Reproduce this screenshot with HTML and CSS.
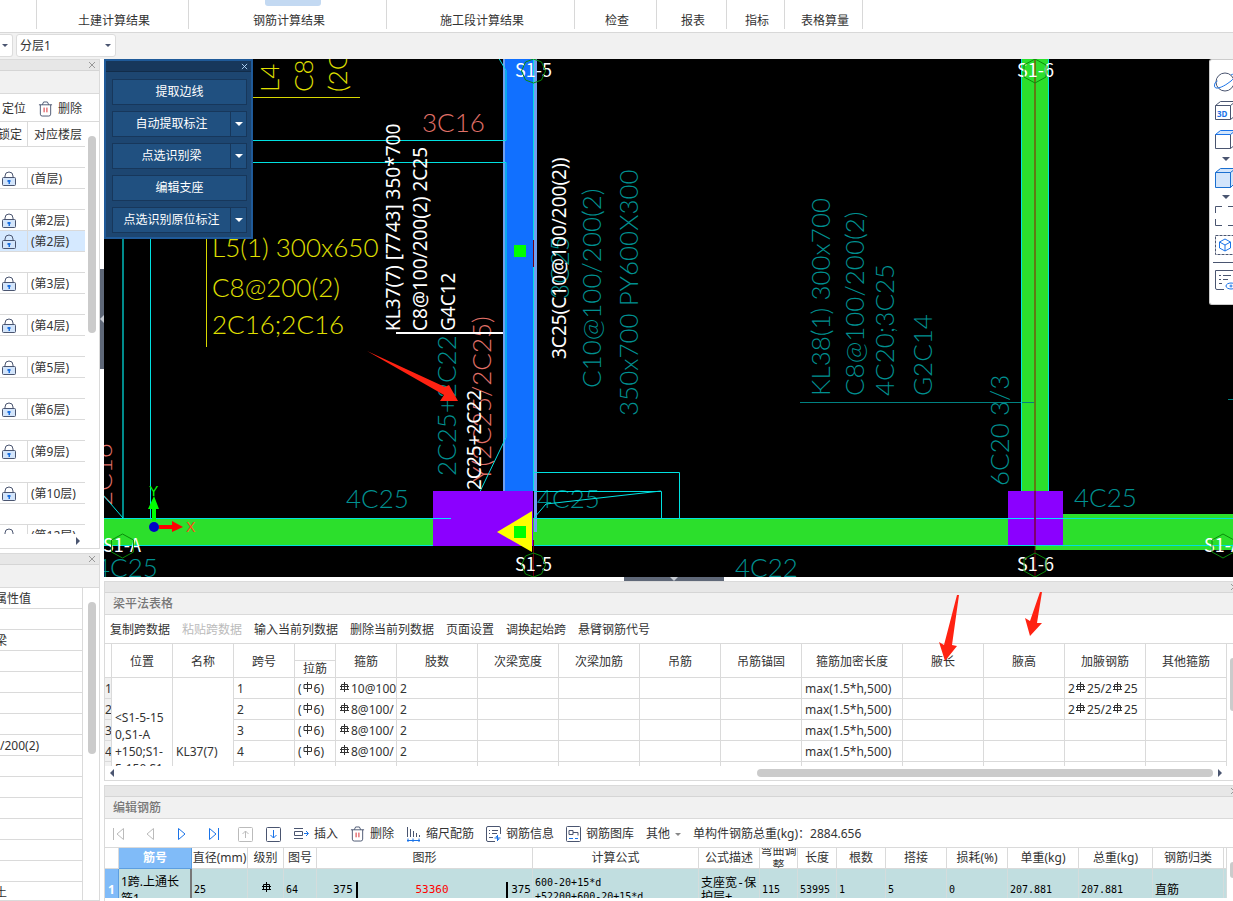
FILE: index.html
```html
<!DOCTYPE html>
<html lang="zh-CN">
<head>
  <meta charset="UTF-8">
  <meta name="viewport" content="width=device-width, initial-scale=1.0">
  <title>梁平法表格</title>
  <link rel="stylesheet" href="styles.css">
</head>
<body>

  <svg class="defs" width="0" height="0">
    <symbol id="lock" viewBox="0 0 16 16">
      <path d="M4 7V5a4 4 0 0 1 8 0v2" fill="none" stroke="#4a5570" />
      <rect x="1.500" y="6.500" width="13" height="8" rx="1" fill="#d3e5fb" stroke="#4a5570" />
      <path d="M6.500 9h3v2H9v2H7.500v-2h-1z" fill="#1a6fe0" />
    </symbol>
    <symbol id="trash" viewBox="0 0 16 16">
      <path d="M1 3.500h14M4.500 3.500l1.500-3h4l1.500 3M2.500 3.500v10q0 2 2 2h7q2 0 2-2v-10" fill="none" stroke="#4a5570" />
      <path d="M6.500 6.500v5M9.500 6.500v5" stroke="#d8232a" />
    </symbol>
    <symbol id="close" viewBox="0 0 8 8">
      <path d="M1 1l6 6M7 1l-6 6" fill="none" stroke="currentColor" />
    </symbol>
    <symbol id="hpb" viewBox="0 0 10 10">
      <path d="M4.500 0v10M1 2.500h7.500v4H1z" fill="none" stroke="currentColor" />
    </symbol>
    <symbol id="hrb" viewBox="0 0 10 10">
      <path d="M4.500 0v10M1.500 7.500v-5h6v5M0 7.500h9M0 4.500h9" fill="none" stroke="currentColor" />
    </symbol>
  </svg>

  <nav class="ribbon">
    <a href="#" class="group edge"></a>
    <a href="#" class="group civil">土建计算结果</a>
    <a href="#" class="group steel"><span class="active-mark"></span>钢筋计算结果</a>
    <a href="#" class="group stage">施工段计算结果</a>
    <a href="#" class="group check">检查</a>
    <a href="#" class="group report">报表</a>
    <a href="#" class="group index">指标</a>
    <a href="#" class="group calc">表格算量</a>
  </nav>

  <div class="filters">
    <label class="combo combo-cut"><select aria-label="楼层"><option></option></select></label>
    <label class="combo"><select aria-label="分层"><option>分层1</option></select></label>
  </div>

  <div class="workspace">

    <aside class="sidebar">
      <section class="panel floors">
        <div class="titlebar"><button class="close" aria-label="关闭"><svg width="8" height="8"><use href="#close" /></svg></button></div>
        <div class="caption"></div>
        <div class="side-tools">
          <button>定位</button>
          <button><svg width="15" height="16"><use href="#trash" /></svg>删除</button>
        </div>
        <div class="floor-body">
          <table class="floor-table">
            <thead>
              <tr><th class="lock-col"><span>锁定</span></th><th>对应楼层</th></tr>
            </thead>
            <tbody>
              <tr class="blank"><td colspan="2"></td></tr>
              <tr><td><svg width="16" height="16"><use href="#lock" /></svg></td><td>(首层)</td></tr>
              <tr class="blank"><td colspan="2"></td></tr>
              <tr><td><svg width="16" height="16"><use href="#lock" /></svg></td><td>(第2层)</td></tr>
              <tr class="selected"><td><svg width="16" height="16"><use href="#lock" /></svg></td><td>(第2层)</td></tr>
              <tr class="blank"><td colspan="2"></td></tr>
              <tr><td><svg width="16" height="16"><use href="#lock" /></svg></td><td>(第3层)</td></tr>
              <tr class="blank"><td colspan="2"></td></tr>
              <tr><td><svg width="16" height="16"><use href="#lock" /></svg></td><td>(第4层)</td></tr>
              <tr class="blank"><td colspan="2"></td></tr>
              <tr><td><svg width="16" height="16"><use href="#lock" /></svg></td><td>(第5层)</td></tr>
              <tr class="blank"><td colspan="2"></td></tr>
              <tr><td><svg width="16" height="16"><use href="#lock" /></svg></td><td>(第6层)</td></tr>
              <tr class="blank"><td colspan="2"></td></tr>
              <tr><td><svg width="16" height="16"><use href="#lock" /></svg></td><td>(第9层)</td></tr>
              <tr class="blank"><td colspan="2"></td></tr>
              <tr><td><svg width="16" height="16"><use href="#lock" /></svg></td><td>(第10层)</td></tr>
              <tr class="blank"><td colspan="2"></td></tr>
              <tr><td><svg width="16" height="16"><use href="#lock" /></svg></td><td>(第12层)</td></tr>
            </tbody>
          </table>
          <div class="vbar"></div>
        </div>
        <div class="side-scroll"><span class="tri-right"></span></div>
      </section>

      <section class="panel props">
        <div class="titlebar"><button class="close" aria-label="关闭"><svg width="8" height="8"><use href="#close" /></svg></button></div>
        <div class="caption"></div>
        <div class="prop-body">
          <table class="prop-table">
            <tr><td><span class="cut">属性值</span></td></tr>
            <tr><td></td></tr>
            <tr><td><span class="cut">梁</span></td></tr>
            <tr><td></td></tr>
            <tr><td></td></tr>
            <tr><td></td></tr>
            <tr><td></td></tr>
            <tr><td>/200(2)</td></tr>
            <tr><td></td></tr>
            <tr><td></td></tr>
            <tr><td></td></tr>
            <tr><td></td></tr>
            <tr><td></td></tr>
            <tr><td></td></tr>
            <tr><td><span class="cut">土</span></td></tr>
            <tr><td></td></tr>
          </table>
          <div class="vbar"></div>
        </div>
      </section>
    </aside>

    <div class="splitter"><button aria-label="收起"><span class="tri-left"></span></button></div>

    <main class="main">

      <div class="canvas">
        <svg class="drawing" width="100%" height="100%">
          <g transform="translate(-104 -59)">
            <!-- beams and columns -->
            <rect x="0" y="518" width="1020" height="28" fill="#2cdf2c" />
            <rect x="1035" y="514" width="1000" height="36" fill="#2cdf2c" />
            <rect x="1021" y="0" width="28" height="491" fill="#2cdf2c" />
            <rect x="503" y="0" width="34" height="491" fill="#6f9ff0" />
            <rect x="505" y="0" width="29" height="491" fill="#1170ff" />
            <rect x="534" y="491" width="3" height="41" fill="#6f9ff0" />

            <g class="cad teal">
              <text x="346" y="508">4C25</text>
              <text x="537" y="508">4C25</text>
              <text x="1074" y="507">4C25</text>
              <text x="735" y="577">4C22</text>
              <text x="95" y="577">4C25</text>
              <text x="456" y="476" transform="rotate(-90 456 476)">2C25+2C22</text>
              <text x="569" y="299" transform="rotate(-90 569 299)">3C25</text>
              <text x="601" y="388" transform="rotate(-90 601 388)">C10@100/200(2)</text>
              <text x="638" y="416" transform="rotate(-90 638 416)">350x700 PY600X300</text>
              <text x="830" y="396" transform="rotate(-90 830 396)">KL38(1) 300x700</text>
              <text x="864" y="396" transform="rotate(-90 864 396)">C8@100/200(2)</text>
              <text x="894" y="396" transform="rotate(-90 894 396)">4C20;3C25</text>
              <text x="932" y="396" transform="rotate(-90 932 396)">G2C14</text>
              <text x="1009" y="486" transform="rotate(-90 1009 486)">6C20 3/3</text>
            </g>
            <g class="cad yellow">
              <text x="279" y="92" transform="rotate(-90 279 92)">L4</text>
              <text x="313" y="92" transform="rotate(-90 313 92)">C8</text>
              <text x="347" y="92" transform="rotate(-90 347 92)">(2C</text>
              <text x="212" y="257">L5(1) 300x650</text>
              <text x="212" y="297">C8@200(2)</text>
              <text x="212" y="334">2C16;2C16</text>
            </g>
            <g class="cad salmon">
              <text x="422" y="132">3C16</text>
              <text x="112" y="506" transform="rotate(-90 112 506)">2C16</text>
              <text x="491" y="482" transform="rotate(-90 491 482)">Y(2C25/2C25)</text>
            </g>

            <!-- axis and outline lines -->
            <path d="M252 97.500h108M206.500 239v108" stroke="#d8d800" />
            <path d="M123 239v279" stroke="#008b8b" stroke-width="2" />
            <path d="M800 402.500h235M1228 399.500h5" stroke="#008080" />
            <g class="outline">
              <path d="M150.500 239v279M104 496l19 22M104 518.500h47M151 518.500h282M104 545.500h375" />
              <path d="M252 140.500h254v-70l-7-12M252 162.500h254v275l-26 54" />
              <path d="M470 491.500h36M533.500 59v432M534 472.500h145.500v46M534 491.500h127.500v27M661 491l-115 13-12 14" />
              <path d="M534 518.500h474M534 545.500h699M1063 518.500h170" />
              <path d="M1021.500 59v432M1048.500 59v432" />
            </g>

            <rect x="433" y="491" width="100" height="55" fill="#8b00ff" />
            <rect x="1008" y="491" width="55" height="54" fill="#8b00ff" />
            <path d="M433 518.500h18M1008 518.500h55" stroke="#00e5ff" />
            <path d="M1035 59v432" stroke="#5f7a14" stroke-width="2" />
            <path d="M1035 491v54" stroke="#7d0070" stroke-width="2" />
            <path d="M1035 546v31M533.500 540v37M533.500 240v27" stroke="#700010" />

            <!-- grips -->
            <path d="M497 532l35-21v41z" fill="#ff0" />
            <rect x="514" y="526" width="12" height="12" fill="#0f0" />
            <rect x="514" y="245" width="12" height="12" fill="#0f0" />

            <!-- grid bubbles -->
            <g class="note">
              <text x="515" y="77">S1-5</text>
              <text x="515" y="571">S1-5</text>
              <text x="1017" y="77">S1-6</text>
              <text x="1017" y="571">S1-6</text>
              <text x="103" y="552">S1-A</text>
              <text x="1204" y="552">S1-A</text>
            </g>
            <g fill="none" stroke="#0a8a0a">
              <path d="M533.500 59l8 3 4 9-4 9-8 3-8-3-4-9 4-9z" />
              <path d="M533.500 553l8 3 4 9-4 9-8 3-8-3-4-9 4-9z" />
              <path d="M1035 59l11 6v12l-11 6-11-6V65z" />
              <path d="M1035 553l11 6v12l-11 6-11-6v-12z" />
              <path d="M122.500 534l11 6v12l-11 6-11-6v-12z" />
              <path d="M1223 534l11 6v12l-11 6-11-6v-12z" />
            </g>
            <g class="note beam-note">
              <text x="400" y="331" transform="rotate(-90 400 331)">KL37(7) [7743] 350*700</text>
              <text x="427" y="331" transform="rotate(-90 427 331)">C8@100/200(2) 2C25</text>
              <text x="455" y="331" transform="rotate(-90 455 331)">G4C12</text>
              <text x="566" y="359" transform="rotate(-90 566 359)">3C25(C10@100/200(2))</text>
              <text x="481" y="490" transform="rotate(-90 481 490)">2C25+2C22</text>
            </g>
            <path d="M396 333h107" stroke="#fff" stroke-width="2" />

            <!-- coordinate axes -->
            <path d="M152 521v-12h-4l6-13 5 13h-3v12z" fill="#0f0" />
            <path d="M159 525h13v-4l11 6-11 5v-3h-13z" fill="#f00" />
            <circle cx="154" cy="527" r="5" fill="#0000c8" />
            <g class="axis">
              <text x="149" y="496" fill="#0f0">Y</text>
              <text x="186" y="532" fill="#ff4a1a">X</text>
            </g>

            <path d="M367 351l78 36 4-2 9 16h-18l4-6z" fill="#ff2212" />
          </g>
        </svg>

        <div class="tool-window">
          <div class="tool-title"><button aria-label="关闭"><svg width="7" height="7"><use href="#close" /></svg></button></div>
          <div class="tool-list">
            <div class="tool"><button class="label">提取边线</button></div>
            <div class="tool"><button class="label">自动提取标注</button><button class="drop" aria-label="更多"></button></div>
            <div class="tool"><button class="label">点选识别梁</button><button class="drop" aria-label="更多"></button></div>
            <div class="tool"><button class="label">编辑支座</button></div>
            <div class="tool"><button class="label">点选识别原位标注</button><button class="drop" aria-label="更多"></button></div>
          </div>
        </div>

        <div class="view-bar">
          <button aria-label="动态观察"><svg width="24" height="24" viewBox="0 0 24 24" fill="none">
            <circle cx="12" cy="12" r="9" stroke="#4a5570" />
            <path d="M18 5c6-3 6 1 0 6S2 21 1.500 16c0-3 1-4 3-5" stroke="#1a73e8" /></svg></button>
          <button aria-label="三维"><svg width="24" height="24" viewBox="0 0 24 24" fill="none" stroke="#4a5570">
            <path d="M2.500 6.500h15v14h-15zM2.500 6.500l5-4h15v14l-5 4M17.500 6.500l5-4" />
            <text x="4" y="18">3D</text></svg></button>
          <button aria-label="俯视"><svg width="24" height="24" viewBox="0 0 24 24" fill="none">
            <path d="M2.500 6.500h15v14h-15zM22.500 2.500v14l-5 4" stroke="#4a5570" />
            <path d="M2.500 6.500l5-4h15l-5 4z" fill="#d3e5fb" stroke="#1a73e8" /></svg></button>
          <span class="tri-down"></span>
          <button aria-label="实体"><svg width="24" height="24" viewBox="0 0 24 24" fill="#d3e5fb" stroke="#1a6fd0">
            <path d="M2.500 6.500h15v15h-15zM2.500 6.500l5-4h15l-5 4M22.500 2.500v14l-5 5v-15" /></svg></button>
          <span class="tri-down"></span>
          <button aria-label="全屏"><svg width="24" height="24" viewBox="0 0 24 24" fill="none" stroke="#4a5570">
            <path d="M2.500 9V2.500H9M2.500 15v6.500H9M15 2.500h7V9M15 21.500h7V15" /></svg></button>
          <button aria-label="局部三维"><svg width="24" height="24" viewBox="0 0 24 24" fill="none">
            <rect x="2.500" y="2.500" width="19" height="19" stroke="#4a5570" stroke-dasharray="3 1" />
            <path d="M12 6l5.500 3v6L12 18l-5.500-3V9zM6.500 9l5.500 3 5.500-3M12 12v6" stroke="#1a73e8" /></svg></button>
          <hr>
          <button aria-label="显示设置"><svg width="24" height="24" viewBox="0 0 24 24" fill="none" stroke="#4a5570">
            <path d="M11 21.500H4q-1.500 0-1.500-1.500V2.500H22M6 7.500h2M10 7.500h8M6 11.500h2M10 11.500h5M6 15.500h3" />
            <ellipse cx="18" cy="18" rx="5" ry="3" stroke="#1a73e8" /><circle cx="18" cy="18" r="1" stroke="#1a73e8" /></svg></button>
        </div>
      </div>

      <div class="h-splitter"><button aria-label="收起"><span class="tri-down"></span></button></div>

      <section class="panel beam-panel">
        <div class="titlebar"><button class="close" aria-label="关闭"><svg width="8" height="8"><use href="#close" /></svg></button></div>
        <h2>梁平法表格</h2>
        <div class="tools">
          <button>复制跨数据</button>
          <button disabled>粘贴跨数据</button>
          <button>输入当前列数据</button>
          <button>删除当前列数据</button>
          <button>页面设置</button>
          <button>调换起始跨</button>
          <button>悬臂钢筋代号</button>
        </div>
        <div class="beam-body">
          <table class="beam-table">
            <colgroup>
              <col class="c-no"><col class="c-61"><col class="c-61"><col class="c-61"><col class="c-tie"><col class="c-61">
              <col class="c-81"><col class="c-81"><col class="c-81"><col class="c-81"><col class="c-81">
              <col class="c-101"><col class="c-81"><col class="c-81"><col class="c-81"><col class="c-81">
            </colgroup>
            <thead>
              <tr>
                <th rowspan="2"></th><th rowspan="2">位置</th><th rowspan="2">名称</th><th rowspan="2">跨号</th><th></th>
                <th rowspan="2">箍筋</th><th rowspan="2">肢数</th><th rowspan="2">次梁宽度</th><th rowspan="2">次梁加筋</th>
                <th rowspan="2">吊筋</th><th rowspan="2">吊筋锚固</th><th rowspan="2">箍筋加密长度</th><th rowspan="2">腋长</th>
                <th rowspan="2">腋高</th><th rowspan="2">加腋钢筋</th><th rowspan="2">其他箍筋</th>
              </tr>
              <tr><th>拉筋</th></tr>
            </thead>
            <tbody>
              <tr>
                <td class="no">1</td>
                <td rowspan="7">&lt;S1-5-15<br>0,S1-A<br>+150;S1-<br>5-150,S1<br>-A+150&gt;</td>
                <td rowspan="7">KL37(7)</td>
                <td>1</td><td>(<svg class="bar"><use href="#hpb" /></svg>6)</td><td><svg class="bar"><use href="#hrb" /></svg>10@100</td><td>2</td>
                <td></td><td></td><td></td><td></td><td>max(1.5*h,500)</td><td></td><td></td>
                <td>2<svg class="bar"><use href="#hrb" /></svg>25/2<svg class="bar"><use href="#hrb" /></svg>25</td><td></td>
              </tr>
              <tr>
                <td class="no">2</td>
                <td>2</td><td>(<svg class="bar"><use href="#hpb" /></svg>6)</td><td><svg class="bar"><use href="#hrb" /></svg>8@100/</td><td>2</td>
                <td></td><td></td><td></td><td></td><td>max(1.5*h,500)</td><td></td><td></td>
                <td>2<svg class="bar"><use href="#hrb" /></svg>25/2<svg class="bar"><use href="#hrb" /></svg>25</td><td></td>
              </tr>
              <tr>
                <td class="no">3</td>
                <td>3</td><td>(<svg class="bar"><use href="#hpb" /></svg>6)</td><td><svg class="bar"><use href="#hrb" /></svg>8@100/</td><td>2</td>
                <td></td><td></td><td></td><td></td><td>max(1.5*h,500)</td><td></td><td></td><td></td><td></td>
              </tr>
              <tr>
                <td class="no">4</td>
                <td>4</td><td>(<svg class="bar"><use href="#hpb" /></svg>6)</td><td><svg class="bar"><use href="#hrb" /></svg>8@100/</td><td>2</td>
                <td></td><td></td><td></td><td></td><td>max(1.5*h,500)</td><td></td><td></td><td></td><td></td>
              </tr>
              <tr>
                <td class="no"></td>
                <td></td><td></td><td></td><td></td>
                <td></td><td></td><td></td><td></td><td></td><td></td><td></td><td></td><td></td>
              </tr>
              <tr><td class="no"></td><td colspan="13"></td></tr>
              <tr><td class="no"></td><td colspan="13"></td></tr>
            </tbody>
          </table>
          <div class="vbar"></div>
        </div>
        <div class="hscroll"><span class="tri-left"></span><div class="hbar"></div><span class="tri-right"></span></div>

        <svg class="marks" width="110" height="70">
          <path d="M24 3h2l-7 50 5 1-12 15-6-19 5 3z" fill="#ff2212" />
          <path d="M107 0h2l-5 31h5L97 44l-5-18 5 3z" fill="#ff2212" />
        </svg>
      </section>

      <section class="panel rebar-panel">
        <div class="titlebar"><button class="close" aria-label="关闭"><svg width="8" height="8"><use href="#close" /></svg></button></div>
        <h2>编辑钢筋</h2>
        <div class="tools icons">
          <div class="pager">
            <button aria-label="首行"><svg width="14" height="16" fill="none" stroke="#bbb"><path d="M2.500 2v12M12.500 2.500v11L6 8z" /></svg></button>
            <button aria-label="上一行"><svg width="14" height="16" fill="none" stroke="#bbb"><path d="M10.500 2.500v11L4 8z" /></svg></button>
            <button aria-label="下一行"><svg width="14" height="16" fill="none" stroke="#1a73e8"><path d="M3.500 2.500v11L10 8z" /></svg></button>
            <button aria-label="末行"><svg width="14" height="16" fill="none" stroke="#1a73e8"><path d="M2.500 2.500v11L9 8zM11.500 2v12" /></svg></button>
          </div>
          <button aria-label="上移"><svg width="16" height="16" fill="none" stroke="#bbb"><rect x="1.500" y="1.500" width="14" height="14" rx="1" /><path d="M8.500 12V5M5.500 8l3-3 3 3" /></svg></button>
          <button aria-label="下移"><svg width="16" height="16" fill="none" stroke="#4a5570"><rect x="1.500" y="1.500" width="14" height="14" rx="1" /><path d="M8.500 4v8M5.500 9l3 3 3-3" stroke="#1a73e8" /></svg></button>
          <button><svg width="16" height="16" fill="none" stroke="#4a5570"><path d="M1 2.500h9M1 12.500h9M1.500 5.500h8v4h-8z" /><path d="M11 7.500h4M13 5l2.500 2.500L13 10" stroke="#1a73e8" /></svg>插入</button>
          <button><svg width="15" height="16"><use href="#trash" /></svg>删除</button>
          <button><svg width="15" height="16" fill="none" stroke="#4a5570"><path d="M1.500 1v10M4.500 3v8M7.500 5v6M10.500 7v4M13.500 9v2" /><path d="M1 14.500h13M2 12.500v4M7 12.500v4M13 12.500v4" stroke="#1a73e8" /></svg>缩尺配筋</button>
          <button><svg width="15" height="16" fill="none" stroke="#4a5570"><path d="M9 15.500H2q-1.500 0-1.500-1.500V2Q.5.500 2 .5h11q1.500 0 1.500 1.500v6M3 4.500h1M6 4.500h6M3 7.500h1M6 7.500h5M3 11.500h4" /><path d="M11.500 9v6M8.500 12h6M10 10l3 4" stroke="#1a73e8" /></svg>钢筋信息</button>
          <button><svg width="15" height="16" fill="none" stroke="#4a5570"><rect x=".5" y=".5" width="14" height="15" rx="1" /><path d="M3 4.500h4v4H3zM7 6.500h5v3" /><path d="M3 12.500h4M9 12.500h3" stroke="#1a73e8" /></svg>钢筋图库</button>
          <button>其他<span class="tri-down"></span></button>
          <span>单构件钢筋总重(kg)：2884.656</span>
        </div>
        <div class="rebar-body">
          <table class="rebar-table">
            <colgroup>
              <col class="r-no"><col class="r-name"><col class="r-dia"><col class="r-grade"><col class="r-code"><col class="r-shape">
              <col class="r-formula"><col class="r-desc"><col class="r-bend"><col class="r-len"><col class="r-count">
              <col class="r-lap"><col class="r-lap"><col class="r-unit"><col class="r-total"><col class="r-kind"><col class="r-end">
            </colgroup>
            <thead>
              <tr>
                <th></th><th class="current">筋号</th><th>直径(mm)</th><th>级别</th><th>图号</th><th>图形</th><th>计算公式</th>
                <th>公式描述</th><th><div class="two">弯曲调整</div></th><th>长度</th><th>根数</th><th>搭接</th><th>损耗(%)</th>
                <th>单重(kg)</th><th>总重(kg)</th><th>钢筋归类</th><th></th>
              </tr>
            </thead>
            <tbody>
              <tr>
                <td class="current">1</td>
                <td class="name">1跨.上通长<br>筋1</td>
                <td>25</td><td><svg class="bar"><use href="#hrb" /></svg></td><td>64</td>
                <td><div class="shape"><span class="hook">375</span><span class="len">53360</span><span class="hook right">375</span></div></td>
                <td class="lines">600-20+15*d<br>+52200+600-20+15*d</td>
                <td class="lines cn">支座宽-保<br>护层+…</td>
                <td>115</td><td>53995</td><td>1</td><td>5</td><td>0</td><td>207.881</td><td>207.881</td><td class="cn">直筋</td><td></td>
              </tr>
            </tbody>
          </table>
          <div class="vbar"></div>
        </div>
        <div class="rebar-scroll"></div>
      </section>

    </main>
  </div>

</body>
</html>
```

FILE: styles.css
```css
* {
  box-sizing: border-box;
}

body {
  font-family: "Noto Sans", "Noto Sans CJK SC", sans-serif;
  font-size: 12px;
  line-height: 16px;
  color: #333;
  background-color: #fff;
  margin: 0;
  height: 100vh;
  display: flex;
  flex-direction: column;
  overflow: hidden;
}

button {
  font: inherit;
  color: inherit;
  background: none;
  border: none;
  padding: 0;
  cursor: pointer;
  white-space: nowrap;
}

svg {
  flex: none;
}

.defs {
  position: absolute;
}

/* ribbon */

.ribbon {
  display: flex;
  height: 33px;
  border-bottom: 1px solid #d8d8d8;
  flex: none;
}

.group {
  display: flex;
  align-items: flex-end;
  justify-content: center;
  position: relative;
  height: 29px;
  padding-left: 3px;
  border-right: 1px solid #d8d8d8;
  color: #333;
  text-decoration: none;
}

.edge { width: 37px; }
.civil { width: 152px; }
.steel { width: 198px; }
.stage { width: 188px; }
.check { width: 82px; }
.report { width: 70px; }
.index { width: 58px; }
.calc { width: 78px; }

.active-mark {
  position: absolute;
  top: 0;
  left: 76px;
  width: 56px;
  height: 6px;
  background-color: #c3d9f2;
  border-radius: 0 0 3px 3px;
}

.filters {
  display: flex;
  gap: 3px;
  height: 26px;
  padding: 1px 0;
  background-color: #f1f1f1;
  flex: none;
}

.combo {
  position: relative;
  width: 100px;
}

.combo-cut {
  width: 13px;
}

.combo select {
  appearance: none;
  display: block;
  width: 100%;
  height: 23px;
  padding: 0 3px;
  font: inherit;
  color: #333;
  background-color: #fff;
  border: 1px solid #dcdcdc;
  border-radius: 3px;
}

.combo-cut select {
  border-left: none;
  border-radius: 0 3px 3px 0;
}

.combo::after {
  content: "";
  position: absolute;
  right: 5px;
  top: 10px;
  border: 3px solid transparent;
  border-top-color: #4a5570;
  border-bottom: none;
}

/* layout */

.workspace {
  flex: 1;
  display: flex;
  min-height: 0;
}

.sidebar {
  width: 100px;
  display: flex;
  flex-direction: column;
  gap: 4px;
  flex: none;
}

.main {
  flex: 1;
  min-width: 0;
  display: flex;
  flex-direction: column;
}

.panel {
  position: relative;
  border: 1px solid #dadada;
  background-color: #fff;
}

.sidebar .panel {
  border-left: none;
}

.main .panel {
  border-right: none;
}

.titlebar {
  display: flex;
  justify-content: flex-end;
  align-items: center;
  height: 11px;
  background-color: #e7e7e7;
  border-bottom: 1px solid #d5d5d5;
}

.close {
  display: flex;
  margin-right: 3px;
  color: #999;
}

.main .close {
  margin-right: -5px;
}

.caption {
  height: 23px;
  background-color: #f1f1f1;
  border-bottom: 1px solid #dadada;
}

.tri-left, .tri-right, .tri-down {
  display: block;
  width: 0;
  height: 0;
  border: 4px solid transparent;
}

.tri-left { border-right-color: #4a5570; border-left: none; }
.tri-right { border-left-color: #4a5570; border-right: none; }
.tri-down { border-top-color: #4a5570; border-bottom: none; }

.vbar {
  background-color: #cbcbcb;
  border-radius: 4px;
  flex: none;
}

/* floor list */

.floors {
  height: 490px;
}

.side-tools {
  display: flex;
  gap: 12px;
  height: 28px;
  padding: 2px 0 0 2px;
  border-bottom: 1px solid #dadada;
}

.side-tools button {
  display: flex;
  align-items: center;
  gap: 5px;
}

.floor-body {
  display: flex;
  height: 412px;
  overflow: hidden;
}

table {
  border-collapse: separate;
  border-spacing: 0;
  table-layout: fixed;
}

th, td {
  font-weight: normal;
  padding: 0;
  overflow: hidden;
  white-space: nowrap;
}

.floor-table {
  width: 85px;
  height: 0;
  margin-right: 3px;
}

.floor-table tr {
  height: 21px;
}

.floor-table th, .floor-table td {
  border-bottom: 1px solid #dadada;
  text-align: left;
  padding: 2px 0 0 3px;
}

.floor-table th {
  height: 25px;
  padding-left: 6px;
}

.floor-table .lock-col {
  width: 28px;
  padding-left: 0;
}

.lock-col span {
  float: right;
  margin-right: 5px;
}

.floor-table tr > :first-child {
  border-right: 1px solid #dadada;
}

.floor-table .blank td {
  border-right: none;
}

.floor-table td {
  height: 21px;
}

.floor-table td:first-child {
  padding-left: 1px;
}

.floor-table td svg {
  display: block;
}

.selected td {
  background-color: #d5e9ff;
}

.floor-body .vbar {
  width: 8px;
  height: 197px;
  margin-top: 14px;
}

.side-scroll {
  padding: 3px 18px;
}

.side-scroll .tri-right {
  margin-left: 58px;
}

/* property list */

.props {
  flex: 1;
  overflow: hidden;
}

.prop-body {
  display: flex;
}

.prop-table {
  width: 83px;
  margin-right: 5px;
  border-right: 1px solid #dadada;
}

.prop-table td {
  height: 21px;
  padding-top: 1px;
  border-bottom: 1px solid #dadada;
}

.prop-table .cut {
  display: block;
  margin-left: -5px;
}

.prop-body .vbar {
  width: 8px;
  height: 152px;
  margin-top: 14px;
}

.splitter {
  width: 4px;
  padding-top: 210px;
  flex: none;
}

.splitter button {
  display: flex;
  align-items: center;
  width: 4px;
  height: 100px;
  background-color: #5f6878;
}

.splitter .tri-left {
  border-right-color: #c8ccd4;
}

/* drawing area */

.canvas {
  position: relative;
  flex: 1;
  min-height: 0;
  background-color: #000;
  overflow: hidden;
}

.drawing {
  display: block;
}

.cad {
  font-family: "Lato", sans-serif;
  font-size: 26px;
  font-weight: 300;
}

.teal { fill: #009090; }
.yellow { fill: #e0e000; }
.salmon { fill: #e07068; }

.outline {
  fill: none;
  stroke: #00e0e0;
}

.note {
  font-family: "Noto Sans CJK SC", sans-serif;
  font-size: 18px;
  fill: #fff;
}

.beam-note {
  font-family: "Noto Sans", sans-serif;
  font-size: 19px;
}

.axis {
  font-family: "Liberation Sans", sans-serif;
  font-size: 14px;
}

.tool-window {
  position: absolute;
  top: 0;
  left: 0;
  width: 149px;
  height: 180px;
  background-color: #1d4671;
  border: 2px solid #1f5a99;
}

.tool-title {
  display: flex;
  justify-content: flex-end;
  align-items: center;
  height: 11px;
  padding-right: 3px;
  background-color: #17375b;
  border-bottom: 1px solid #122c49;
}

.tool-title button {
  display: flex;
  color: #b8dcff;
}

.tool-list {
  display: flex;
  flex-direction: column;
  gap: 6px;
  padding: 7px 4px 0 6px;
}

.tool {
  display: flex;
  height: 26px;
  color: #fff;
  background-color: #205080;
  border: 1px solid #17375b;
}

.tool .label {
  flex: 1;
}

.tool .drop {
  display: flex;
  align-items: center;
  justify-content: center;
  width: 16px;
  border-left: 1px solid #17375b;
}

.drop::after {
  content: "";
  border: 4px solid transparent;
  border-top-color: #fff;
  border-bottom: none;
}

.view-bar {
  position: absolute;
  top: 0;
  right: 0;
  width: 24px;
  height: 246px;
  padding: 10px 0 0 3px;
  display: flex;
  flex-direction: column;
  gap: 5px;
  background-color: #fff;
  border: 1px solid #ccc;
  border-right: none;
  border-radius: 3px 0 0 3px;
  overflow: hidden;
}

.view-bar svg {
  display: block;
}

.view-bar text {
  font-size: 8px;
  font-weight: bold;
  fill: #1a73e8;
  stroke: none;
}

.view-bar .tri-down {
  margin-left: 9px;
  flex: none;
}

.view-bar hr {
  width: 100%;
  margin: 0;
  border: none;
  border-top: 1px solid #4a5570;
}

.h-splitter {
  height: 4px;
  flex: none;
}

.h-splitter button {
  display: flex;
  justify-content: center;
  width: 100px;
  height: 4px;
  margin-left: 520px;
  background-color: #5f6878;
}

.h-splitter .tri-down {
  border-top-color: #c8ccd4;
}

/* bottom panels */

h2 {
  margin: 0;
  height: 22px;
  padding-left: 8px;
  font-size: 12px;
  font-weight: 500;
  line-height: 22px;
  color: #777;
  background-color: #f1f1f1;
  border-bottom: 1px solid #dadada;
}

.tools {
  display: flex;
  align-items: center;
  gap: 12px;
  height: 29px;
  padding: 2px 0 0 5px;
  border-bottom: 1px solid #dadada;
}

.tools button:disabled {
  color: #bbb;
}

.beam-panel {
  height: 200px;
  flex: none;
  margin-bottom: 4px;
}

.beam-body {
  display: flex;
  justify-content: space-between;
  height: 122px;
  overflow: hidden;
}

.beam-table {
  width: 1122px;
  height: 0;
  flex: none;
}

.c-no { width: 7px; }
.c-61 { width: 61px; }
.c-tie { width: 41px; }
.c-81 { width: 81px; }
.c-101 { width: 101px; }

.beam-table th, .beam-table td {
  border-right: 1px solid #dadada;
  border-bottom: 1px solid #dadada;
}

.beam-table th {
  height: 17px;
  line-height: 16px;
}

.beam-table th[rowspan] {
  padding-top: 2px;
}

.beam-table td {
  height: 21px;
  padding-left: 3px;
  line-height: 17px;
}

.beam-table .no {
  padding: 0;
  background-color: #f1f1f1;
}

.bar {
  width: 10px;
  height: 10px;
  margin: 0 1px;
  vertical-align: 1px;
}

.beam-body .vbar, .rebar-body .vbar {
  width: 3px;
  height: 53px;
  margin-top: 14px;
  border-radius: 4px 0 0 4px;
}

.hscroll {
  display: flex;
  align-items: center;
  gap: 5px;
  height: 14px;
  padding: 0 11px 0 5px;
}

.hscroll .tri-left {
  margin-right: auto;
}

.hbar {
  width: 41%;
  height: 8px;
  background-color: #cbcbcb;
  border-radius: 4px;
}

.marks {
  position: absolute;
  top: 10px;
  right: 190px;
}

.rebar-panel {
  height: 116px;
  flex: none;
  border-bottom: none;
  overflow: hidden;
}

.icons button {
  display: flex;
  align-items: center;
  gap: 5px;
}

.pager {
  display: flex;
  gap: 18px;
  padding: 0 4px 0 1px;
}

.icons .tri-down {
  border-width: 3px;
  border-top-color: #888;
  border-bottom: none;
}

.rebar-body {
  display: flex;
  justify-content: space-between;
  height: 50px;
  overflow: hidden;
}

.rebar-body .vbar {
  height: 16px;
}

.rebar-table {
  width: 1122px;
  height: 0;
  flex: none;
}

.r-no { width: 14px; }
.r-name { width: 73px; }
.r-dia { width: 56px; }
.r-grade { width: 36px; }
.r-code { width: 33px; }
.r-shape { width: 216px; }
.r-formula { width: 166px; }
.r-desc { width: 61px; }
.r-bend { width: 38px; }
.r-len { width: 39px; }
.r-count { width: 49px; }
.r-lap { width: 61px; }
.r-unit { width: 71px; }
.r-total { width: 74px; }
.r-kind { width: 71px; }
.r-end { width: 3px; }

.rebar-table th {
  height: 21px;
  border-right: 1px solid #dadada;
  border-bottom: 1px solid #dadada;
}

.rebar-table .two {
  height: 20px;
  line-height: 15px;
  white-space: normal;
  display: flex;
  align-items: center;
}

.rebar-table td {
  height: 42px;
  padding-left: 2px;
  font-family: "DejaVu Sans Mono", "Noto Sans CJK SC", monospace;
  font-size: 10px;
  color: #000;
  background-color: #c1dee0;
  border-right: 1px solid #d4dcdc;
}

.rebar-table .current {
  color: #fff;
  font-family: inherit;
  font-size: 12px;
  font-weight: bold;
  background-color: #80bbf8;
  border-color: #5c9ee0;
  padding: 0;
  text-align: center;
}

.rebar-table td:nth-child(4) {
  text-align: center;
}

.rebar-table .name {
  font-family: inherit;
  font-size: 12px;
  line-height: 17px;
  border-right: 2px solid #777;
}

.rebar-table .lines {
  line-height: 14px;
}

.rebar-table .cn {
  font-size: 12px;
}

.shape {
  display: flex;
  justify-content: space-between;
  align-items: center;
  font-size: 11px;
}

.hook {
  margin-left: 14px;
  padding-right: 3px;
  border-right: 2px solid #000;
}

.hook.right {
  margin-left: 0;
  padding: 0 1px 0 3px;
  border-right: none;
  border-left: 2px solid #000;
}

.len {
  color: #f00;
}

.rebar-scroll {
  width: 830px;
  height: 4px;
  margin: 3px 0 0 16px;
  background-color: #cbcbcb;
  border-radius: 4px;
}
```
